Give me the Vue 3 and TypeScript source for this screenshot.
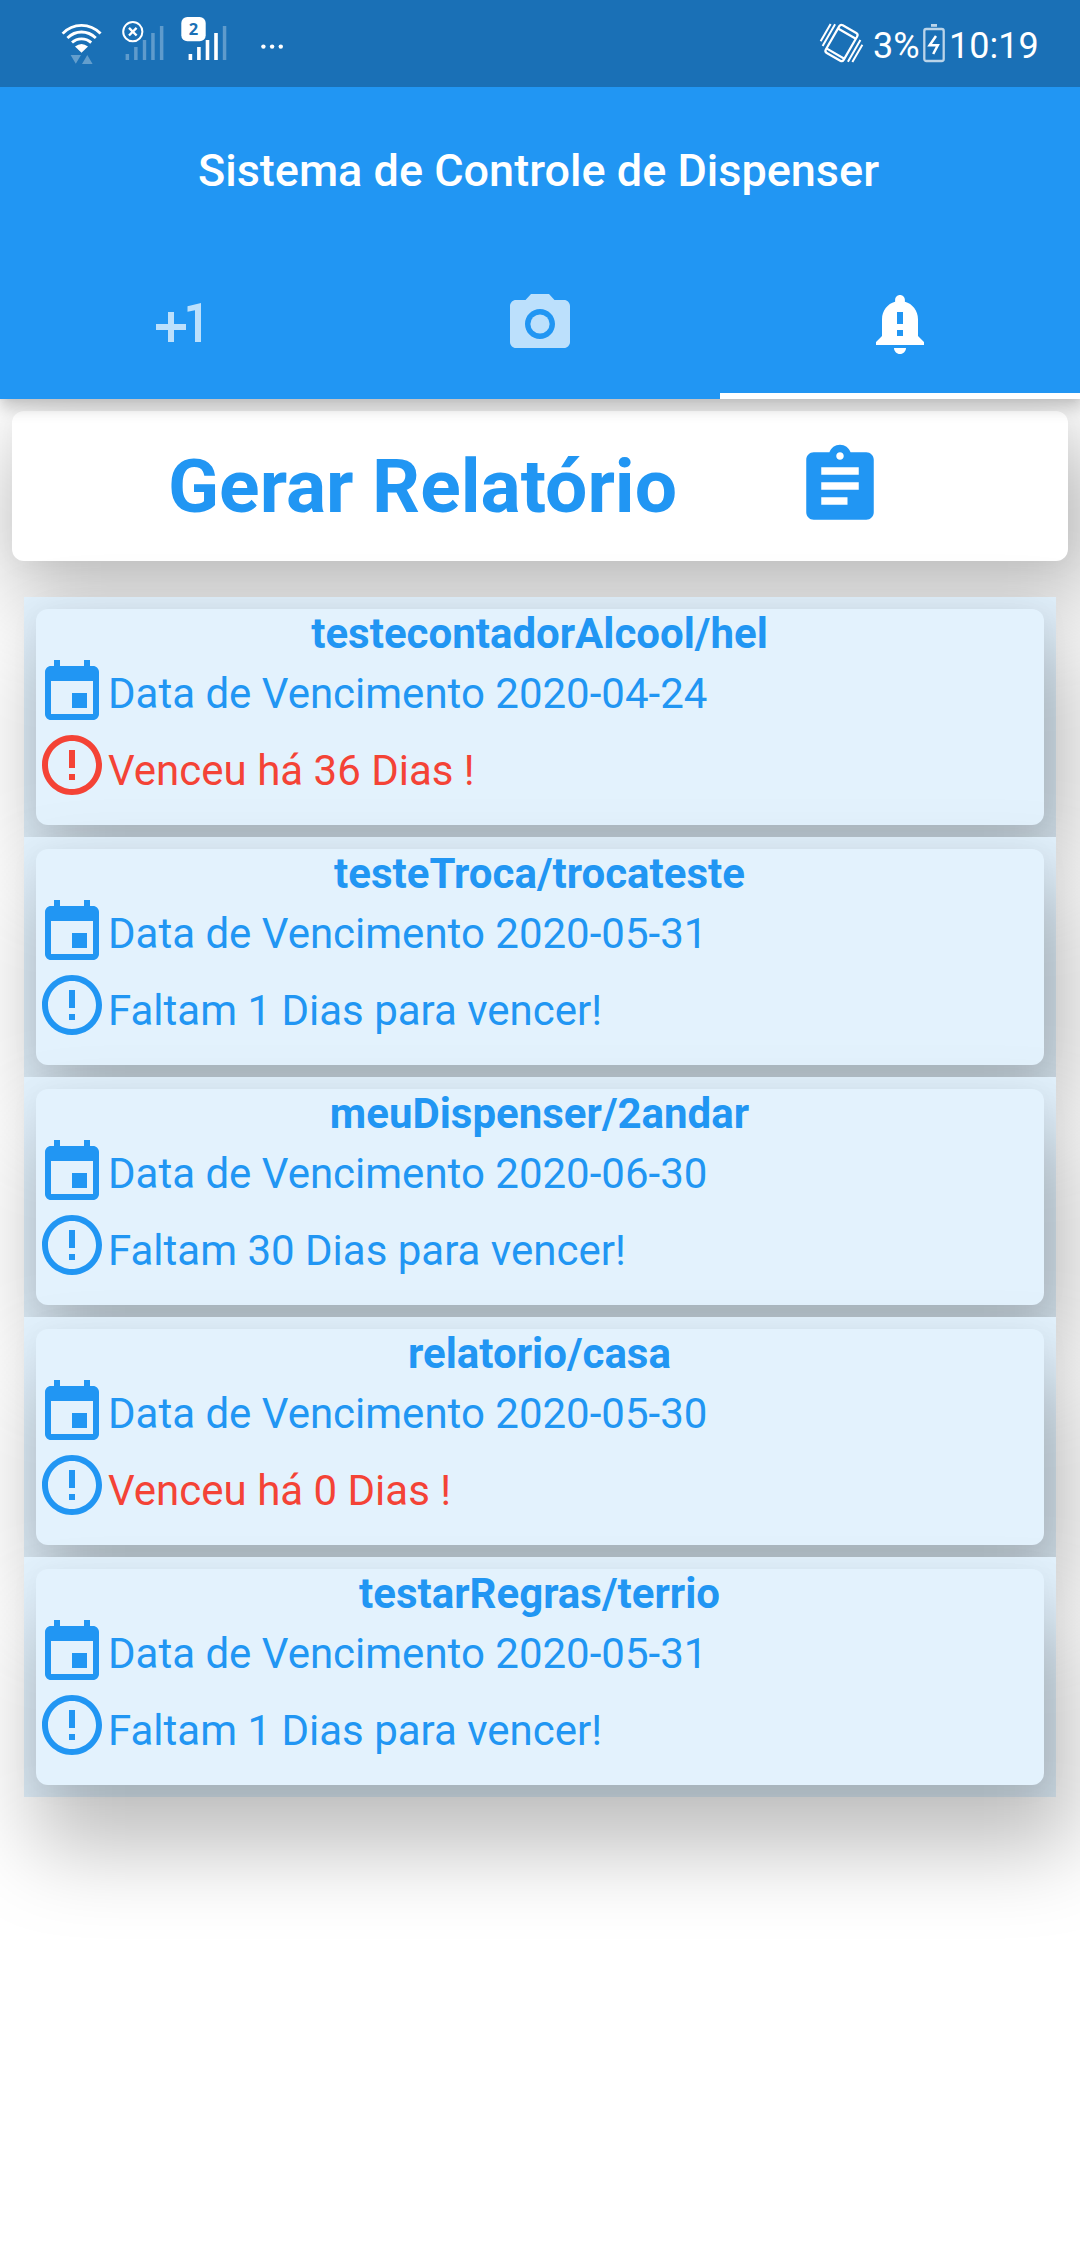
<script setup lang="ts">
interface Dispenser {
  name: string
  due: string
  status: string
  expired: boolean
  alertIcon: boolean
}

const dispensers: Dispenser[] = [
  { name: 'testecontadorAlcool/hel', due: '2020-04-24', status: 'Venceu há 36 Dias !', expired: true, alertIcon: true },
  { name: 'testeTroca/trocateste', due: '2020-05-31', status: 'Faltam 1 Dias para vencer!', expired: false, alertIcon: false },
  { name: 'meuDispenser/2andar', due: '2020-06-30', status: 'Faltam 30 Dias para vencer!', expired: false, alertIcon: false },
  { name: 'relatorio/casa', due: '2020-05-30', status: 'Venceu há 0 Dias !', expired: true, alertIcon: false },
  { name: 'testarRegras/terrio', due: '2020-05-31', status: 'Faltam 1 Dias para vencer!', expired: false, alertIcon: false },
]

// The cast shadow drops further the lower a card sits on the screen.
const shadowDrop = (index: number): string => {
  const top = 609 + index * 240
  return `${((top * 2) / 3 + 600) * 0.034483}px`
}
</script>

<template>
  <div class="screen">
    <header class="header">
      <div class="status-bar">
        <svg class="status-left" width="300" height="87" viewBox="0 0 300 87" fill="none">
          <g stroke="#fff" stroke-width="2.8">
            <path d="M62.6 33.6Q70.5 25.4 81.5 25.4T100.6 33.6" />
            <path d="M67.4 38Q73.5 32 81.5 32T95.8 38" />
            <path d="M72 42.6Q76 38.8 81.5 38.8T91.2 42.6" />
          </g>
          <path d="M75 46.5Q81.500 41.500 88 46.500L81.500 52.800Z" fill="#fff" />
          <path d="M70.600 55h10.400l-5.200 8.800zM82 64h10.600l-5.300-9z" fill="#fff" fill-opacity=".32" />
          <path d="M125.600 54h3.500v6h-3.500zM134.100 47h3.500v13h-3.500zM142.800 40h3.400v20h-3.400zM151.200 33h3.500v27h-3.500zM159.900 26h3.500v34h-3.500z" fill="#fff" fill-opacity=".3" />
          <circle cx="132.800" cy="31.700" r="9.600" fill="#1a70b6" stroke="#fff" stroke-width="2" />
          <path d="M129 27.900l7.600 7.600M136.600 27.900l-7.600 7.600" stroke="#fff" stroke-width="2.400" />
          <path d="M188.600 54h3.600v6h-3.600zM197.100 47h3.600v13h-3.600zM205.700 40h3.600v20h-3.600zM214.200 33h3.600v27h-3.600z" fill="#fff" />
          <path d="M222.800 26h3.500v34h-3.500z" fill="#fff" fill-opacity=".3" />
          <rect x="181.300" y="17" width="24.400" height="24.300" rx="6" fill="#fff" />
          <text x="193.500" y="34.800" class="sim">2</text>
          <g fill="#fff">
            <circle cx="263.400" cy="46.600" r="2.200" />
            <circle cx="272.100" cy="46.600" r="2.200" />
            <circle cx="280.800" cy="46.600" r="2.200" />
          </g>
        </svg>
        <div class="status-right">
          <svg width="48" height="87" viewBox="816 0 48 87" fill="none" stroke="#fff" stroke-width="2.200">
            <g transform="rotate(30 841.500 43)">
              <rect x="831.200" y="27" width="20.600" height="32" rx="2.500" />
              <path d="M831.200 32.200h20.600M831.200 55.200h20.600" />
              <path d="M826.600 30v25M822.600 32v20M856.400 31v25M860.400 34v20" stroke-width="2" />
            </g>
          </svg>
          <span class="battery-text">3%</span>
          <svg class="battery" width="22" height="87" viewBox="0 0 22 87" fill="none">
            <path d="M8 24h6v2.800H8z" fill="#fff" fill-opacity=".7" />
            <rect x="1.300" y="29" width="19.400" height="32" rx="2" stroke="#fff" stroke-opacity=".7" stroke-width="2.300" />
            <path d="M13 36L6.600 45.300H14.800L10.200 54" stroke="#fff" stroke-width="2.500" />
          </svg>
          <span class="clock">10:19</span>
        </div>
      </div>
      <div class="title">Sistema de Controle de Dispenser</div>
      <nav class="tabs">
        <div class="tab">
          <svg class="icon" viewBox="0 0 24 24"><path d="M10 8H8v4H4v2h4v4h2v-4h4v-2h-4zm4.500-1.920V7.900l2.500-.500V18h2V5z" /></svg>
        </div>
        <div class="tab">
          <svg class="icon" viewBox="0 0 24 24">
            <circle cx="12" cy="12" r="3.200" />
            <path d="M9 2L7.170 4H4c-1.100 0-2 .900-2 2v12c0 1.100.900 2 2 2h16c1.100 0 2-.900 2-2V6c0-1.100-.900-2-2-2h-3.170L15 2H9zm3 15c-2.760 0-5-2.240-5-5s2.240-5 5-5 5 2.240 5 5-2.240 5-5 5z" />
          </svg>
        </div>
        <div class="tab active">
          <svg class="icon" viewBox="0 0 24 24">
            <path fill-rule="evenodd" d="M12 2.330c-.920 0-1.630.750-1.630 1.670v.600C7.850 5.250 6 7.600 6 10.400V16l-2 2v1h16v-1l-2-2V10.400c0-2.800-1.850-5.150-4.370-5.800V4c0-.920-.710-1.670-1.630-1.670zM11 8h2v4h-2zM11 14h2v2h-2zM10 20h4c0 1.100-.900 2-2 2s-2-.900-2-2z" />
          </svg>
        </div>
      </nav>
    </header>

    <main class="body">
      <section class="report elevated">
        <span class="report-label">Gerar Relatório</span>
        <svg class="report-icon" viewBox="0 0 24 24"><path d="M19 3h-4.180C14.400 1.840 13.300 1 12 1c-1.300 0-2.400.840-2.820 2H5c-1.100 0-2 .900-2 2v14c0 1.100.900 2 2 2h14c1.100 0 2-.900 2-2V5c0-1.100-.900-2-2-2zm-7 0c.550 0 1 .450 1 1s-.450 1-1 1-1-.450-1-1 .450-1 1-1zm2 14H7v-2h7v2zm3-4H7v-2h10v2zm0-4H7V7h10v2z" /></svg>
      </section>

      <ul class="list">
        <li v-for="(item, i) in dispensers" :key="item.name" class="item">
          <article class="card elevated" :style="{ '--drop': shadowDrop(i) }">
            <h2 class="name">{{ item.name }}</h2>
            <div class="row">
              <svg class="icon" viewBox="0 0 24 24"><path d="M17 12h-5v5h5v-5zM16 1v2H8V1H6v2H5c-1.110 0-1.990.900-1.990 2L3 19c0 1.100.890 2 2 2h14c1.100 0 2-.900 2-2V5c0-1.100-.900-2-2-2h-1V1h-2zm3 18H5V8h14v11z" /></svg>
              <span>Data de Vencimento {{ item.due }}</span>
            </div>
            <div class="row">
              <svg class="icon" :class="{ red: item.alertIcon }" viewBox="0 0 24 24"><path d="M11 15h2v2h-2zm0-8h2v6h-2zm.990-5C6.470 2 2 6.480 2 12s4.470 10 9.990 10C17.520 22 22 17.520 22 12S17.520 2 11.990 2zM12 20c-4.420 0-8-3.580-8-8s3.580-8 8-8 8 3.580 8 8-3.580 8-8 8z" /></svg>
              <span class="status" :class="{ red: item.expired }">{{ item.status }}</span>
            </div>
          </article>
        </li>
      </ul>
    </main>
  </div>
</template>

<style>
body {
  margin: 0;
  background: #fff;
}
</style>

<style scoped>
.screen {
  width: 1080px;
  height: 2246px;
  overflow: hidden;
  background: #fff;
  font-family: Roboto, sans-serif;
  color: #2196f3;
}

.header {
  position: relative;
  z-index: 2;
  height: 399px;
  background: #2196f3;
  color: #fff;
  box-shadow: 2px 6px 15px 2px rgba(0, 0, 0, 0.22), 0 0 6px rgba(0, 0, 0, 0.04);
}

.status-bar {
  display: flex;
  justify-content: space-between;
  height: 87px;
  background: #1a70b6;
}

.status-bar svg {
  display: block;
}

.sim {
  font: bold 16.5px 'Noto Sans', sans-serif;
  text-anchor: middle;
  fill: #1a70b6;
}

.status-right {
  display: flex;
  width: 264px;
  font-size: 36px;
  line-height: 42px;
}

.battery-text {
  width: 50px;
  margin: 25px 0 0 9px;
  white-space: nowrap;
}

.clock {
  margin: 25px 0 0 4px;
}

.title {
  height: 168px;
  padding-right: 3px;
  line-height: 168px;
  text-align: center;
  font-size: 45px;
  font-weight: 500;
  white-space: nowrap;
}

.tabs {
  display: flex;
  height: 144px;
}

.tab {
  flex: 1;
  display: flex;
  justify-content: center;
  box-sizing: border-box;
  padding-top: 33px;
  color: rgba(255, 255, 255, 0.7);
}

.tab.active {
  color: #fff;
  border-bottom: 6px solid #fff;
}

.icon {
  display: block;
  flex: none;
  width: 72px;
  height: 72px;
  fill: currentColor;
}

.body {
  padding: 12px;
}

.elevated {
  position: relative;
  border-radius: 12px;
}

.elevated::before,
.elevated::after {
  content: '';
  position: absolute;
  border-radius: 12px;
}

.elevated::before {
  z-index: -2;
  inset: var(--drop) -29.8px calc(-7.4px - var(--drop)) -1px;
  background: rgba(0, 0, 0, 0.25);
  filter: blur(42px);
}

.elevated::after {
  z-index: -1;
  inset: 0;
  background: var(--surface);
  box-shadow: 0 0 30px 2px rgba(0, 0, 0, 0.039);
}

.report {
  --drop: 30.1px;
  --surface: #fff;
  isolation: isolate;
  display: flex;
  align-items: center;
  height: 150px;
}

.report-label {
  width: 627px;
  padding-left: 156px;
  font-size: 75px;
  font-weight: 700;
  line-height: 88px;
  white-space: nowrap;
}

.report-icon {
  width: 90px;
  height: 90px;
  fill: currentColor;
}

.list {
  margin: 36px 12px 0;
  padding: 0;
  list-style: none;
}

.item {
  isolation: isolate;
  box-sizing: border-box;
  height: 240px;
  padding: 12px;
  background: #e3f2fd;
}

.card {
  --surface: #e3f2fd;
  height: 216px;
}

.name {
  margin: 0;
  height: 48px;
  padding-right: 1px;
  line-height: 49px;
  text-align: center;
  font-size: 42px;
  font-weight: 700;
}

.row {
  display: flex;
  align-items: center;
  height: 72px;
  font-size: 42px;
  line-height: 49px;
  white-space: nowrap;
}

.status {
  padding-top: 10px;
}

.red {
  color: #f44336;
}
</style>
